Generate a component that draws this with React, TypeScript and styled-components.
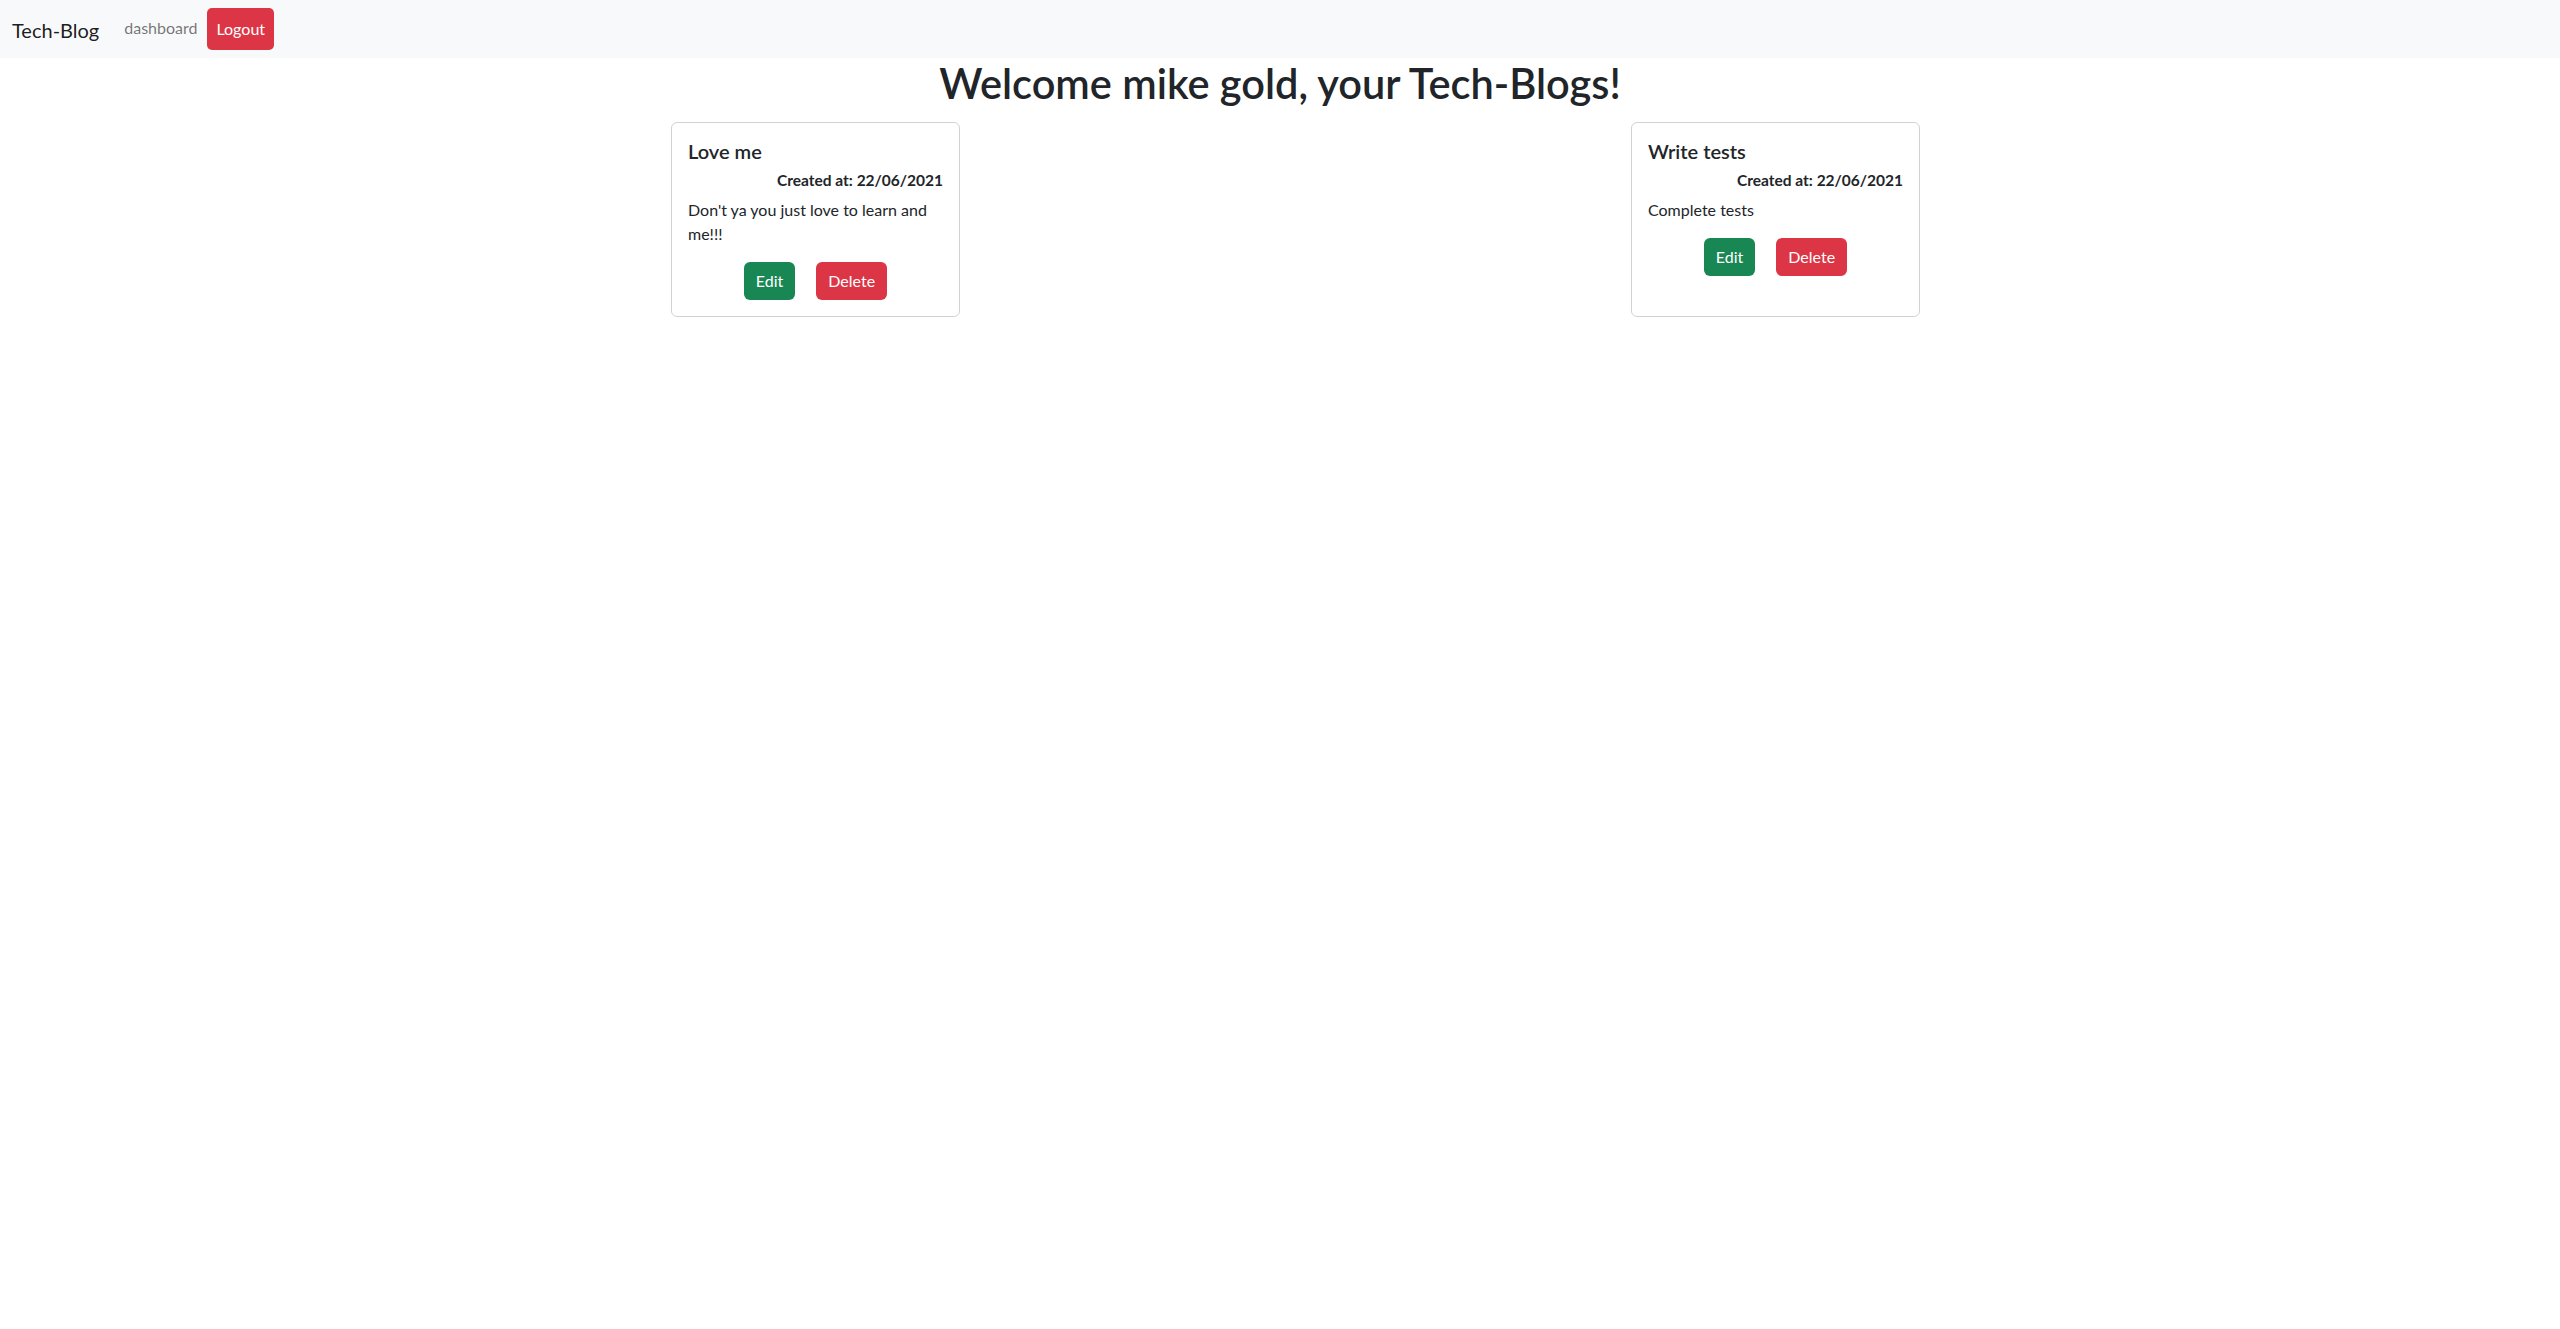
import React from "react";
import styled, { createGlobalStyle } from "styled-components";

const GlobalStyle = createGlobalStyle`
  *, *::before, *::after { box-sizing: border-box; }
  body {
    margin: 0;
    font-family: Lato, "Liberation Sans", sans-serif;
    font-size: 16px;
    line-height: 1.5;
    color: #212529;
    background: #fff;
  }
`;

const Navbar = styled.nav`
  background: #f8f9fa;
  height: 58px;
  display: flex;
  align-items: center;
  padding: 0 12px;
`;

const Brand = styled.a`
  font-size: 20px;
  line-height: 30px;
  color: rgba(0, 0, 0, 0.9);
  text-decoration: none;
  margin-right: 17px;
  padding-top: 2px;
`;

const NavLinks = styled.div`
  display: flex;
  align-items: center;
  gap: 2px;
`;

const NavLink = styled.a<{ $danger?: boolean }>`
  display: block;
  padding: ${(p) => (p.$danger ? "9px 9px" : "8px 8px")};
  line-height: 24px;
  font-size: 16px;
  border-radius: 5px;
  text-decoration: none;
  color: ${(p) => (p.$danger ? "#fff" : "rgba(0, 0, 0, 0.55)")};
  background: ${(p) => (p.$danger ? "#dc3545" : "transparent")};
  margin-top: ${(p) => (p.$danger ? "0" : "-3px")};
`;

const Heading = styled.h1`
  margin: 1px 0 7px;
  text-align: center;
  font-size: 41.5px;
  font-weight: 600;
  line-height: 48px;
`;

const Container = styled.div`
  width: 1320px;
  margin: 0 auto;
  padding: 8px 20px 0 51px;
  display: flex;
  justify-content: space-between;
  align-items: stretch;
`;

const Card = styled.div`
  width: 289px;
  border: 1px solid rgba(0, 0, 0, 0.175);
  border-radius: 6px;
  padding: 16px;
  display: flex;
  flex-direction: column;
`;

const Title = styled.h5`
  margin: 0 0 8px;
  font-size: 20px;
  font-weight: 600;
  line-height: 24px;
`;

const Created = styled.h6`
  margin: 0 0 8px;
  font-size: 15.5px;
  font-weight: 700;
  line-height: 19px;
  text-align: right;
`;

const Text = styled.p`
  margin: 0 0 16px;
  font-size: 16px;
  line-height: 24px;
`;

const Actions = styled.div`
  display: flex;
  justify-content: center;
  gap: 21px;
`;

const Button = styled.button<{ $variant: "success" | "danger" }>`
  font-family: inherit;
  font-size: 16px;
  line-height: 24px;
  padding: 6px 11px;
  border: 1px solid transparent;
  border-radius: 6px;
  color: #fff;
  background: ${(p) => (p.$variant === "success" ? "#198754" : "#dc3545")};
  cursor: pointer;
`;

const posts = [
  { title: "Love me", date: "22/06/2021", body: "Don't ya you just love to learn and me!!!" },
  { title: "Write tests", date: "22/06/2021", body: "Complete tests" },
];

export default function App() {
  return (
    <>
      <GlobalStyle />
      <Navbar>
        <Brand href="#">Tech-Blog</Brand>
        <NavLinks>
          <NavLink href="#">dashboard</NavLink>
          <NavLink href="#" $danger>
            Logout
          </NavLink>
        </NavLinks>
      </Navbar>
      <Heading>Welcome mike gold, your Tech-Blogs!</Heading>
      <Container>
        {posts.map((p) => (
          <Card key={p.title}>
            <Title>{p.title}</Title>
            <Created>Created at: {p.date}</Created>
            <Text>{p.body}</Text>
            <Actions>
              <Button $variant="success">Edit</Button>
              <Button $variant="danger">Delete</Button>
            </Actions>
          </Card>
        ))}
      </Container>
    </>
  );
}
